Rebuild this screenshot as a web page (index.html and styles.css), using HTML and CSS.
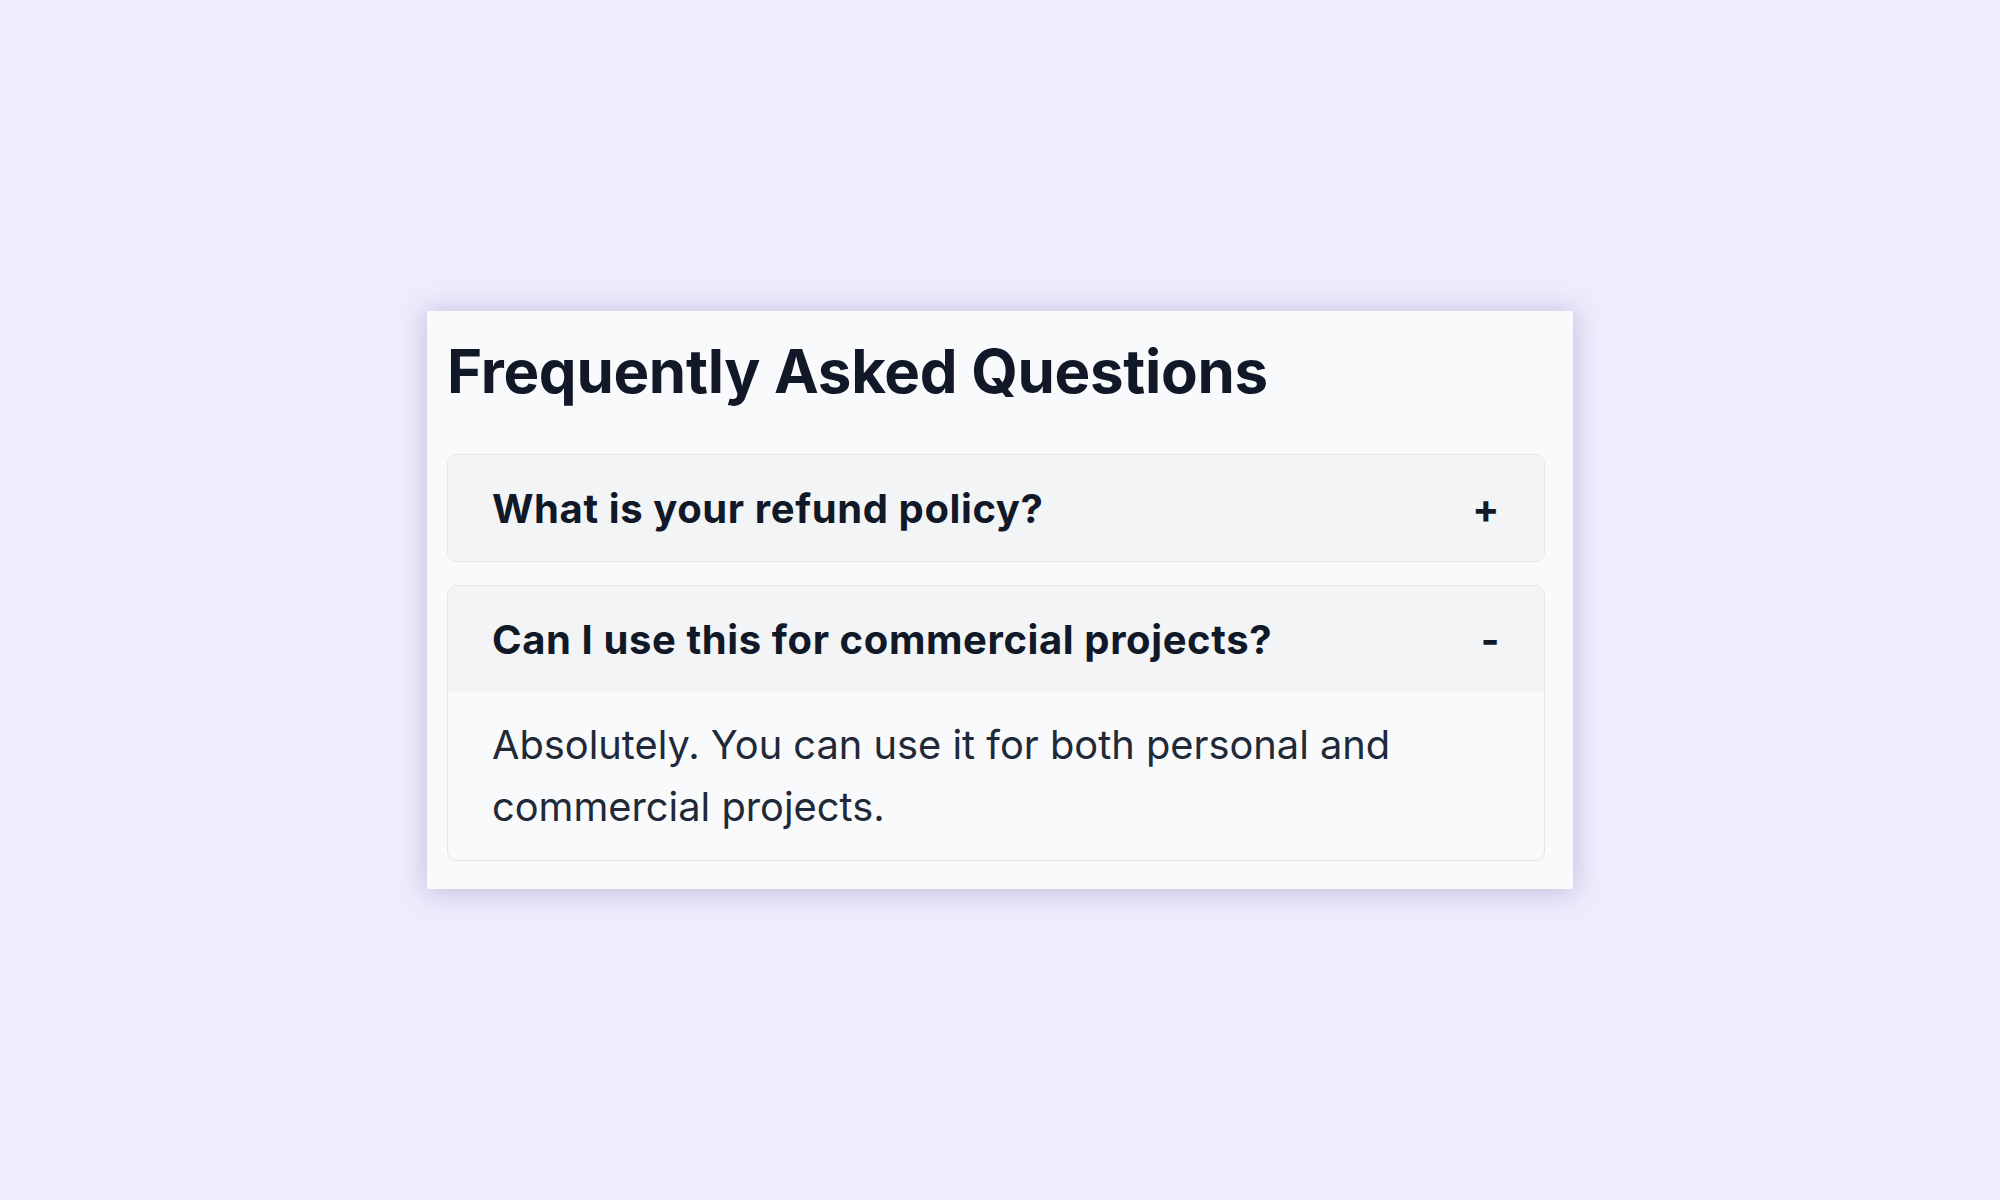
FILE: index.html
```html
<!DOCTYPE html>
<html lang="en">
<head>
<meta charset="utf-8">
<title>FAQ</title>
<link rel="stylesheet" href="styles.css">
</head>
<body>
<main class="page">
  <section class="faq-card">
    <h1 class="faq-title">Frequently Asked Questions</h1>
    <div class="faq-list">
      <div class="faq-item">
        <div class="faq-question">
          <span class="q-text">What is your refund policy?</span>
          <span class="q-icon">+</span>
        </div>
      </div>
      <div class="faq-item open">
        <div class="faq-question">
          <span class="q-text">Can I use this for commercial projects?</span>
          <span class="q-icon">-</span>
        </div>
        <div class="faq-answer">Absolutely. You can use it for both personal and commercial projects.</div>
      </div>
    </div>
  </section>
</main>
</body>
</html>
```

FILE: styles.css
```css
* { box-sizing: border-box; }
html, body { margin: 0; padding: 0; }
body {
  background: #f0ecfd;
  font-family: Inter, "Noto Sans", sans-serif;
  color: #111827;
}
.page {
  min-height: 1200px;
  display: flex;
  align-items: center;
  justify-content: center;
}
.faq-card {
  width: 1146px;
  background: #f9fafb;
  padding: 20px 28px 28px 20px;
  box-shadow: 0 2px 26px 2px rgba(105, 85, 150, 0.3);
}
.faq-title {
  margin: 0 0 43px;
  font-size: 60px;
  line-height: 80px;
  font-weight: 700;
  color: #111827;
  letter-spacing: -0.3px;
}
.faq-list {
  display: flex;
  flex-direction: column;
  gap: 23px;
}
.faq-item {
  border: 1px solid #e4e6ea;
  border-radius: 10px;
  overflow: hidden;
  background: #f9fafb;
}
.faq-question {
  display: flex;
  justify-content: space-between;
  align-items: center;
  padding: 31px 44px 30px 44px;
  background: #f3f4f6;
  font-size: 40px;
  line-height: 45px;
  font-weight: 700;
  letter-spacing: 0.6px;
  color: #111827;
}
.q-icon {
  font-size: 40px;
  font-weight: 700;
}
.faq-answer {
  padding: 22px 44px 22px 44px;
  font-size: 39.8px;
  line-height: 62px;
  color: #1f2937;
}
```
